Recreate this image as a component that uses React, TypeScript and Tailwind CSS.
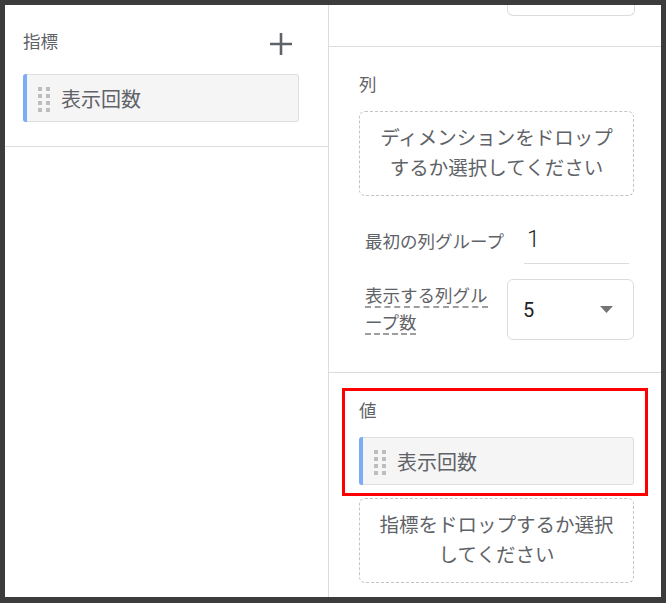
const font = "font-['Roboto','Noto_Sans_CJK_JP',sans-serif]";

function DragDots() {
  return (
    <div className="grid grid-cols-2 gap-x-[4px] gap-y-[3px]">
      {Array.from({ length: 8 }).map((_, i) => (
        <div key={i} className="h-[4px] w-[4px] bg-[#bdbdbd]" />
      ))}
    </div>
  );
}

function Chip({ label }: { label: string }) {
  return (
    <div className="flex h-[48px] items-center rounded-[3px] border border-l-0 border-[#dedede] bg-[#f5f5f5]">
      <div className="h-[48px] w-[4px] -my-px rounded-l-[3px] bg-[#7cacf8]" />
      <div className="ml-[11px] mt-[2px]">
        <DragDots />
      </div>
      <span className="ml-[11px] pt-[4px] text-[20px] leading-none text-[#5f6368]">{label}</span>
    </div>
  );
}

function DropZone({ lines }: { lines: string[] }) {
  return (
    <div className="flex h-[85px] flex-col items-center justify-center rounded-[6px] border border-dashed border-[#c4c4c4] text-center text-[19.5px] leading-[30px] text-[#5f6368]">
      {lines.map((l) => (
        <div key={l}>{l}</div>
      ))}
    </div>
  );
}

export default function App() {
  return (
    <div className={`relative h-[603px] w-[666px] bg-[#3c3c3c] pb-[6px] pl-[5px] pr-[5px] pt-[5px] ${font}`}>
      <div className="flex h-full bg-white">
        <div className="w-[324px] border-r border-[#dcdcdc]">
          <div className="border-b border-[#dcdcdc] pb-[24px] pl-[18px] pr-[29px] pt-[25px]">
            <div className="flex h-[24px] items-center justify-between pr-[7px]">
              <span className="text-[17.5px] leading-[24px] text-[#5f6368]">指標</span>
              <svg width="22" height="22" viewBox="0 0 22 22" className="mt-[4px]">
                <path d="M11 0v22M0 11h22" stroke="#5f6368" strokeWidth="2.6" />
              </svg>
            </div>
            <div className="mt-[20px]">
              <Chip label="表示回数" />
            </div>
          </div>
        </div>

        <div className="flex-1">
          <div className="h-[42px] border-b border-[#dcdcdc]">
            <div className="ml-[178px] h-[11px] w-[128px] rounded-b-[6px] border border-t-0 border-[#dcdcdc]" />
          </div>

          <div className="border-b border-[#dcdcdc] pb-[32px] pl-[30px] pr-[27px] pt-[26px]">
            <div className="mb-[14px] text-[17.5px] leading-[24px] text-[#5f6368]">列</div>
            <DropZone lines={["ディメンションをドロップ", "するか選択してください"]} />

            <div className="mt-[21px] flex items-center pl-[6px]">
              <span className="w-[143px] whitespace-nowrap pt-[2px] text-[17.5px] leading-[24px] text-[#5f6368]">
                最初の列グループ
              </span>
              <div className="ml-[16px] flex h-[47px] w-[105px] items-center border-b border-[#dcdcdc] pl-[3px] text-[23px] font-light text-[#202124]">
                1
              </div>
            </div>

            <div className="mt-[15px] flex items-center pl-[6px]">
              <div className="w-[130px] text-[17.5px] leading-[26.5px] text-[#5f6368]">
                <span className="border-b-2 border-dashed border-[#9e9e9e]">表示する列グループ数</span>
              </div>
              <div className="ml-[12px] flex h-[61px] w-[127px] items-center justify-between rounded-[6px] border border-[#dcdcdc] pl-[15px] pr-[20px]">
                <span className="text-[20px] text-[#202124]">5</span>
                <svg width="13" height="7" viewBox="0 0 13 7">
                  <path d="M0 0h13L6.5 7z" fill="#757575" />
                </svg>
              </div>
            </div>
          </div>

          <div className="pl-[30px] pr-[27px] pt-[26px]">
            <div className="mb-[14px] text-[17.5px] leading-[24px] text-[#5f6368]">値</div>
            <Chip label="表示回数" />
            <div className="mt-[13px]">
              <DropZone lines={["指標をドロップするか選択", "してください"]} />
            </div>
          </div>
        </div>
      </div>

      <div className="absolute left-[342px] top-[388px] h-[108px] w-[306px] border-[3px] border-[#ff0000]" />
    </div>
  );
}
